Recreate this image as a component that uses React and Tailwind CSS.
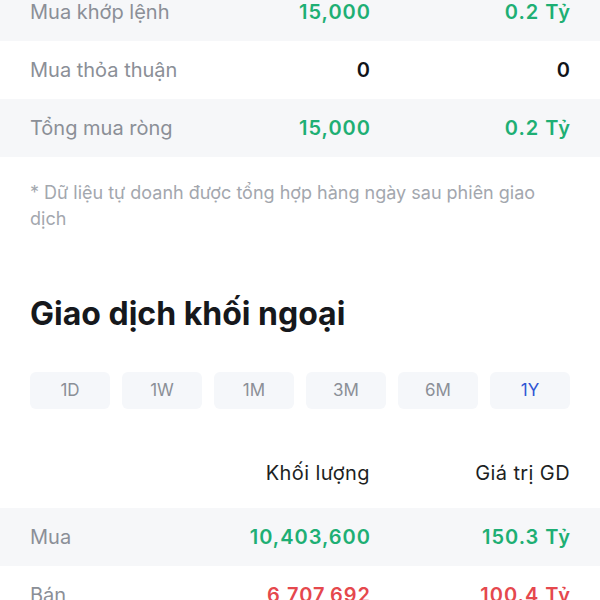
import React from 'react';

const FONT = { fontFamily: 'Inter, "Noto Sans", sans-serif' };

const proprietary = [
  { label: 'Mua khớp lệnh', vol: '15,000', val: '0.2 Tỷ', tone: 'up', shaded: true },
  { label: 'Mua thỏa thuận', vol: '0', val: '0', tone: 'flat', shaded: false },
  { label: 'Tổng mua ròng', vol: '15,000', val: '0.2 Tỷ', tone: 'up', shaded: true },
];

const foreign = [
  { label: 'Mua', vol: '10,403,600', val: '150.3 Tỷ', tone: 'up', shaded: true },
  { label: 'Bán', vol: '6,707,692', val: '100.4 Tỷ', tone: 'down', shaded: false },
];

const ranges = ['1D', '1W', '1M', '3M', '6M', '1Y'];

const toneClass = {
  up: 'text-[#1eaf74]',
  down: 'text-[#e5484d]',
  flat: 'text-[#111418]',
};

const Row = ({ row }) => (
  <div
    className={`grid grid-cols-[1fr_170px_200px] items-center h-[58px] px-[30px] text-[20px] ${
      row.shaded ? 'bg-[#f6f7f9]' : 'bg-white'
    }`}
  >
    <span className="text-[#8b8f97]">{row.label}</span>
    <span className={`text-right font-semibold tracking-[0.05em] -mr-[1px] ${toneClass[row.tone]}`}>{row.vol}</span>
    <span className={`text-right font-semibold tracking-[0.05em] -mr-[1px] ${toneClass[row.tone]}`}>{row.val}</span>
  </div>
);

export default function App() {
  const active = '1Y';

  return (
    <div className="w-[600px] h-[600px] overflow-hidden bg-white" style={FONT}>
      <div className="-mt-[17px]">
        {proprietary.map((row, i) => (
          <Row key={i} row={row} />
        ))}

        <p className="px-[30px] pt-[23px] text-[18px] leading-[26px] text-[#a3a7ae]">
          * Dữ liệu tự doanh được tổng hợp hàng ngày sau phiên giao dịch
        </p>

        <h2 className="px-[30px] mt-[64px] text-[32px] leading-[36px] font-bold text-[#16181c]">
          Giao dịch khối ngoại
        </h2>

        {/* Time range tabs */}
        <div className="grid grid-cols-6 gap-[12px] px-[30px] mt-[40px]">
          {ranges.map((r) => (
            <div
              key={r}
              className={`h-[37px] rounded-[6px] bg-[#f5f7fa] flex items-center justify-center text-[17px] ${
                r === active ? 'text-[#2f55d4]' : 'text-[#8b8f97]'
              }`}
            >
              {r}
            </div>
          ))}
        </div>

        <div className="grid grid-cols-[1fr_170px_200px] px-[30px] mt-[52px] mb-[23px] text-[20px] leading-[24px] tracking-[0.02em] text-[#1d1f23]">
          <span />
          <span className="text-right">Khối lượng</span>
          <span className="text-right">Giá trị GD</span>
        </div>

        {foreign.map((row, i) => (
          <Row key={i} row={row} />
        ))}
      </div>
    </div>
  );
}
